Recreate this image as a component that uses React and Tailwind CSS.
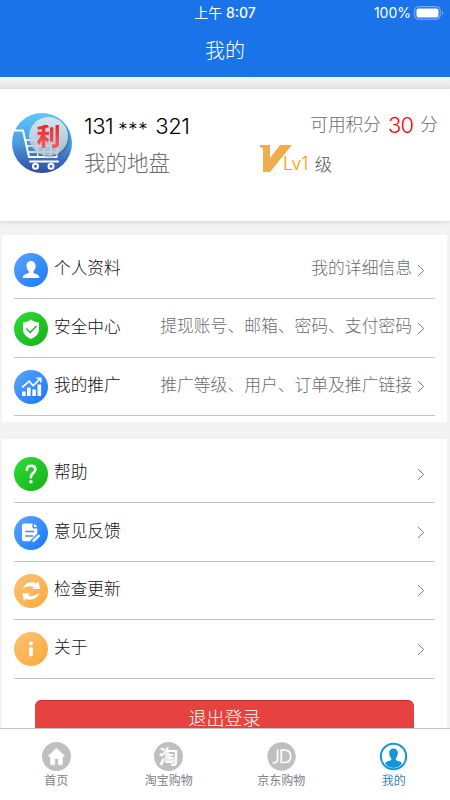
import React from 'react';

const profileRows = [
  { icon: 'user', color: 'blue', label: '个人资料', detail: '我的详细信息' },
  { icon: 'shield', color: 'green', label: '安全中心', detail: '提现账号、邮箱、密码、支付密码' },
  { icon: 'chart', color: 'blue', label: '我的推广', detail: '推广等级、用户、订单及推广链接' },
];

const moreRows = [
  { icon: 'help', color: 'green', label: '帮助' },
  { icon: 'feedback', color: 'blue', label: '意见反馈' },
  { icon: 'update', color: 'orange', label: '检查更新' },
  { icon: 'info', color: 'orange', label: '关于' },
];

const gradients = {
  blue: 'from-[#5aa4fb] to-[#0a78fb]',
  green: 'from-[#2fdc35] to-[#14b018]',
  orange: 'from-[#fcc277] to-[#fea933]',
};

// Every glyph sits on a 34x34 grid
const glyphs = {
  user: (
    <path
      fill="#fff"
      d="M17 8c-3 0-4.700 2.200-4.500 5 .1 2.400 1 4 2.300 5.200v1.900c-2.200 1-5.600 1.500-6 3.800-.1.700.2 1.100.9 1.100h14.800c.7 0 1-.4.9-1.100-.4-2.300-3.800-2.800-6-3.800v-1.900c1.300-1.200 2.100-2.800 2.200-5.200C21.700 10.200 20 8 17 8z"
    />
  ),
  shield: (
    <>
      <path fill="#fff" d="M17 7.500c2.300 2 5 2.700 8 2.900v6.800c0 5-3.400 7.700-8 9.800-4.600-2.100-8-4.800-8-9.800v-6.800c3-.2 5.700-.9 8-2.900z" />
      <path fill="none" stroke="#19b61e" strokeWidth="1.400" d="M12.300 16.500l3.900 3.900 6.300-6.500" />
    </>
  ),
  chart: (
    <>
      <path fill="#fff" d="M8 21.500h3.600V26H8zM13 17.500h3.600V26H13zM18.300 19.500h3.600V26h-3.600zM23.500 14.500h3.600V26h-3.600z" />
      <path fill="none" stroke="#fff" strokeWidth="1.700" d="M8 17.500l7.200-6.300 3.900 4.500 6.700-6.500" />
      <path fill="none" stroke="#fff" strokeWidth="1.500" d="M22.500 8.300h4.300v4.200" />
    </>
  ),
  help: (
    <>
      <path fill="none" stroke="#fff" strokeWidth="2.600" strokeLinecap="round" d="M12.800 12.600c.2-2.500 1.800-3.900 4.200-3.900 2.500 0 4.300 1.500 4.300 3.800 0 1.800-1 2.800-2.500 3.900-1.400 1-1.900 1.800-1.900 3.900" />
      <circle cx="16.900" cy="24.800" r="1.800" fill="#fff" />
    </>
  ),
  feedback: (
    <>
      <path fill="#fff" d="M10 7.500h8.500v3.200c0 1.300.6 1.800 1.800 1.800h3v5.200l-7 7.600h-6.300c-1.300 0-2-.7-2-2V9.500c0-1.300.7-2 2-2zM20 7.500l3.400 3.500H21c-.7 0-1-.3-1-1z" />
      <path stroke="#3a91fb" strokeWidth="1.700" d="M11.200 15.500h9M11.200 20h8" />
      <path stroke="#3a91fb" strokeWidth="4.500" d="M17.500 26.500l8-8" />
      <path stroke="#fff" strokeWidth="2.300" strokeLinecap="round" d="M19.500 24.800l5.300-5" />
    </>
  ),
  update: (
    <>
      <path fill="#fff" d="M8.800 14.500C11.200 8.200 17.600 6.900 22 9.500l2.500-2.300 1.500 7.900h-8l2.100-2.100c-3.500-1.400-7.900-1-11.300 1.500z" />
      <path fill="#fff" d="M25.600 18.500c-2.600 6.800-8.700 8.500-13.400 6.300L9.900 27 8.400 18.900l8 .6-2.300 2c3.700 1.100 8 .1 11.500-3z" />
    </>
  ),
  info: (
    <>
      <circle cx="17" cy="11.500" r="2" fill="#fff" />
      <path stroke="#fff" strokeWidth="3.800" strokeLinecap="round" d="M17 17v5.500" />
    </>
  ),
};

function Row({ icon, color, label, detail }) {
  return (
    <div className="flex h-[58.400px] items-center border-b border-[#c4c4c8] pr-[10px] pt-[1px]">
      <div className={`h-[34px] w-[34px] shrink-0 rounded-full bg-linear-to-br ${gradients[color]}`}>
        <svg viewBox="0 0 34 34" className="h-full w-full">{glyphs[icon]}</svg>
      </div>
      <span className="ml-[6px] -mt-[3px] text-[16.700px] text-[#111]">{label}</span>
      <span className="ml-auto -mt-[3px] text-[16.800px] text-[#6c6c6c]">{detail}</span>
      <svg viewBox="0 0 8 13" className="ml-[5px] h-[13px] w-[8px]">
        <path d="M1 1l5.700 5.500L1 12" fill="none" stroke="#777" strokeWidth="1" />
      </svg>
    </div>
  );
}

function Avatar() {
  return (
    <div className="relative h-[60px] w-[60px] rounded-full bg-linear-to-b from-[#62c8fb] via-[#4b9bdb] to-[#3049a4]">
      <svg viewBox="0 0 60 60" className="h-full w-full">
        <g fill="none" stroke="#fff" strokeLinecap="round" strokeLinejoin="round">
          <path strokeWidth="2" d="M3 17.500h8l6 26.500h27.500l2.500-15" />
          <path strokeWidth="1.500" d="M14 27h34M15.500 33h31M17 39h28M24 27l2 17M32 27v17M40 27l-2 17" />
          <path strokeWidth="2" d="M18 48.500h28" />
        </g>
        <circle cx="23.500" cy="53.300" r="2.500" fill="#4462ac" stroke="#fff" strokeWidth="2" />
        <circle cx="39" cy="53.300" r="2.500" fill="#4462ac" stroke="#fff" strokeWidth="2" />
      </svg>
      <div className="absolute left-[17px] top-[4px] flex h-[39px] w-[39px] items-center justify-center rounded-full bg-linear-to-b from-[#d3e6ef] to-[#b4c6d2]/80 shadow-[1px_1px_2px_rgba(60,75,90,0.6)]">
        <span className="bg-linear-to-b from-[#e8262c] to-[#fa5a5a] bg-clip-text text-[24px] font-black leading-none text-transparent">利</span>
      </div>
    </div>
  );
}

function Tab({ label, active, children }) {
  return (
    <div className="flex flex-1 flex-col items-center pt-[13px]">
      <svg viewBox="0 0 29 29" className="h-[29px] w-[29px]">{children}</svg>
      <span className={`mt-px text-[12px] font-normal leading-[17px] ${active ? 'text-[#3d81b0]' : 'text-[#7d8288]'}`}>{label}</span>
    </div>
  );
}

export default function App() {
  return (
    <div className="flex h-[800px] w-[450px] flex-col overflow-hidden bg-[#f3f3f3] font-['Inter','Noto_Sans_CJK_SC',sans-serif] font-light">
      <header className="h-[77px] shrink-0 bg-[#1a73e8] text-white">
        <div className="grid h-[25px] grid-cols-3 items-center pr-[6px]">
          <span />
          <span className="pl-[6px] text-center text-[14px] font-medium">
            <span className="font-normal">上午</span> 8:07
          </span>
          <span className="flex items-center justify-end gap-[3px] text-[14px] font-normal">
            100%
            <svg viewBox="0 0 30 14" className="h-[14px] w-[30px]">
              <rect x="0.700" y="0.700" width="25.500" height="12.500" rx="3.500" fill="none" stroke="#8db8f4" />
              <rect x="2.500" y="2.500" width="22" height="9" rx="1.800" fill="#fff" />
              <path d="M28 4.800c1.600.7 1.600 3.700 0 4.400z" fill="#8db8f4" />
            </svg>
          </span>
        </div>
        <h1 className="pt-px text-center text-[20px] font-light leading-[50px]">我的</h1>
      </header>

      <div className="h-[12px] shrink-0 bg-linear-to-b from-[#f5f5f5] to-[#e5e5e5]" />

      <section className="flex h-[132px] shrink-0 bg-white pl-[12px] pr-[12px] pt-[24px] shadow-[0_1px_5px_rgba(0,0,0,0.13)]">
        <Avatar />
        <div className="ml-[12px]">
          <div className="flex h-[26px] items-center text-[22px] leading-[26px] tracking-[-0.500px] text-black">
            131
            <span className="ml-[5px] mr-[4px] pt-[6px] text-[18.500px] tracking-[0.800px]">***</span>
            <span className="ml-[3px]">321</span>
          </div>
          <p className="mt-[8px] text-[21.500px] leading-[32px] text-[#6c6c6c]">我的地盘</p>
        </div>
        <div className="ml-auto w-[178px]">
          <div className="flex h-[24px] items-center justify-end text-[17.700px] text-[#6c6c6c]">
            可用积分
            <span className="mx-[7px] text-[22px] font-light tracking-[-0.800px] text-[#fe0000]">30</span>
            分
          </div>
          <div className="mt-[8px] flex h-[30px]">
            <svg viewBox="0 0 32 28" className="h-[28px] w-[32px]">
              <path d="M0 0h10v13L20 0h12L10 27H3V3L0 2z" fill="#f0ad4e" />
            </svg>
            <span className="-ml-[9px] pt-[7px] text-[18px] leading-[24px] tracking-[-0.400px] text-[#ff9c00]">Lv1</span>
            <span className="ml-[7px] pt-[8px] text-[17.500px] leading-[24px] text-[#555]">级</span>
          </div>
        </div>
      </section>

      <section className="ml-[2px] mr-[3px] mt-[14px] h-[187px] shrink-0 bg-white px-[12px] pt-[6px]">
        {profileRows.map((row) => (
          <Row key={row.label} {...row} />
        ))}
      </section>

      <section className="ml-[2px] mr-[3px] mt-[17px] min-h-0 flex-1 overflow-hidden bg-white px-[12px] pt-[6px]">
        {moreRows.map((row) => (
          <Row key={row.label} {...row} />
        ))}
        <button className="ml-[21px] mt-[21px] block h-[42px] w-[379px] rounded-[6px] border border-[#c52f2c] border-x-[#e64340] bg-[#e64340] pb-[3px] text-[18px] leading-[34px] text-white">
          退出登录
        </button>
      </section>

      <nav className="flex h-[72px] shrink-0 border-t border-[#c4c4c4] bg-white">
        <Tab label="首页">
          <circle cx="14.500" cy="14.500" r="14.500" fill="#bfbfbf" />
          <path d="M14.500 6.200l8.300 8h-2.300v7.300c0 .8-.4 1.200-1.200 1.200h-3v-6h-3.600v6h-3c-.8 0-1.200-.4-1.200-1.200v-7.300H6.200z" fill="#fff" stroke="#fff" strokeWidth="0.600" strokeLinejoin="round" />
        </Tab>
        <Tab label="淘宝购物">
          <circle cx="14.500" cy="14.500" r="14.500" fill="#bfbfbf" />
          <text x="14.500" y="21.500" textAnchor="middle" fontSize="19.500" fontWeight="700" fill="#fff">淘</text>
        </Tab>
        <Tab label="京东购物">
          <circle cx="14.500" cy="14.500" r="14.200" fill="#bfbfbf" />
          <path d="M10.600 7.500v10.200c0 2-1.400 3.200-5 3.200M14.300 20.500V8.100h3.200c4.300 0 6.200 2.300 6.200 6.200s-1.900 6.200-6.200 6.200z" fill="none" stroke="#fff" strokeWidth="1.700" />
        </Tab>
        <Tab label="我的" active>
          <circle cx="14.500" cy="14.500" r="12.700" fill="#fff" stroke="#1296db" strokeWidth="2" />
          <path d="M14.500 6.500c-2.900 0-4.500 2-4.300 4.700.1 2.300.9 3.800 2 4.900v2c-1.800 1-5.200 1.300-6.200 3.200 1.900 2.900 5 4.600 8.500 4.600s6.600-1.700 8.500-4.600c-1-1.900-4.400-2.200-6.200-3.200v-2c1.100-1.100 1.900-2.600 2-4.900.2-2.700-1.400-4.700-4.300-4.700z" fill="#1296db" />
        </Tab>
      </nav>
    </div>
  );
}
